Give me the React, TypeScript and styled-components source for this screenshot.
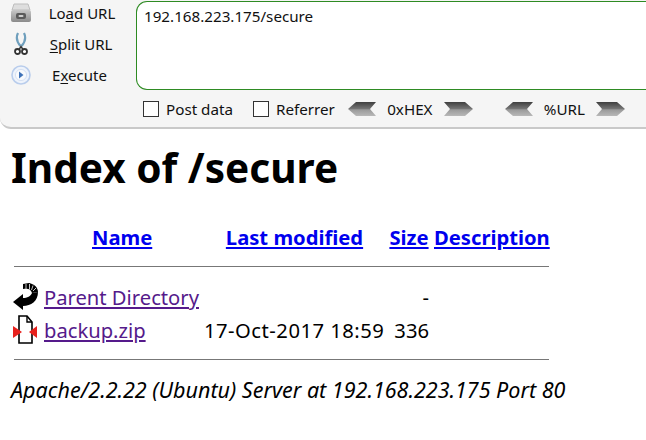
import React from "react";
import styled, { createGlobalStyle } from "styled-components";

const GlobalStyle = createGlobalStyle`
  html, body {
    margin: 0;
    padding: 0;
    background: #fff;
    overflow: hidden;
  }
  body {
    font-family: "Noto Sans", "Open Sans", sans-serif;
    color: #000;
  }
`;

const Page = styled.div`
  width: 646px;
  height: 440px;
  overflow: hidden;
`;

const Toolbar = styled.div`
  box-sizing: border-box;
  height: 129px;
  background: #f5f5f5;
  border-bottom: 2px solid #c9c9c9;
  border-bottom-left-radius: 11px;
  display: grid;
  grid-template-columns: 136px 1fr;
`;

const ActionList = styled.div`
  display: flex;
  flex-direction: column;
  margin-top: -3px;
`;

const Action = styled.div`
  height: 31px;
  display: grid;
  grid-template-columns: 42px 1fr;
  align-items: center;
`;

const ActionIcon = styled.div`
  display: flex;
  justify-content: center;
`;

const ActionLabel = styled.span<{ $shift: number }>`
  font-size: 15px;
  color: #111;
  text-align: center;
  white-space: nowrap;
  padding-right: ${(p) => p.$shift}px;
  u {
    text-underline-offset: 2px;
  }
`;

const Main = styled.div`
  display: flex;
  flex-direction: column;
`;

const UrlBox = styled.div`
  box-sizing: border-box;
  height: 89px;
  margin-top: 1px;
  background: #fff;
  border: 1px solid #2e8b23;
  border-right: none;
  border-radius: 11px 0 0 11px;
  padding: 4px 7px;
  font-size: 15.2px;
  color: #111;
`;

const Options = styled.div`
  display: flex;
  align-items: center;
  height: 38px;
  padding-left: 7px;
  font-size: 15.2px;
  color: #111;
`;

const Check = styled.span<{ $gap: number }>`
  display: flex;
  align-items: center;
  gap: 7px;
  margin-right: ${(p) => p.$gap}px;
  &::before {
    content: "";
    box-sizing: border-box;
    width: 16px;
    height: 16px;
    background: #fff;
    border: 1px solid #333;
  }
`;

const Codec = styled.span<{ $width: number; $gap: number }>`
  display: flex;
  align-items: center;
  justify-content: space-between;
  width: ${(p) => p.$width}px;
  margin-right: ${(p) => p.$gap}px;
`;

const Content = styled.div`
  padding-left: 11px;
`;

const Title = styled.h1`
  margin: 0;
  padding-top: 13px;
  font-size: 40.6px;
  line-height: 52px;
  font-weight: 700;
`;

const Listing = styled.div`
  margin-top: 28px;
  width: 538px;
`;

const ListRow = styled.div<{ $height: number; $top?: number }>`
  display: grid;
  grid-template-columns: 33px 162px 177px 52px 1fr;
  align-items: center;
  height: ${(p) => p.$height}px;
  margin-top: ${(p) => p.$top || 0}px;
  font-size: 20.2px;
`;

const HeadCell = styled.a<{ $indent?: number }>`
  text-align: ${(p) => (p.$indent !== undefined ? "left" : "center")};
  padding-left: ${(p) => p.$indent || 0}px;
  font-weight: 700;
  color: #0000ee;
  text-decoration: underline;
  white-space: nowrap;
`;

const DescHead = styled(HeadCell)`
  margin-left: -1px;
`;

const FileLink = styled.a`
  color: #551a8b;
  text-decoration: underline;
  white-space: nowrap;
`;

const FileIcon = styled.span`
  display: flex;
  padding-left: 2px;
`;

const Modified = styled.span`
  white-space: nowrap;
  letter-spacing: 0.5px;
  margin-left: -2px;
`;

const SizeCell = styled.span`
  text-align: right;
  white-space: nowrap;
  padding-right: 6px;
`;

const Rule = styled.hr<{ $top: number }>`
  margin: ${(p) => p.$top}px 0 0 3px;
  width: 535px;
  height: 1px;
  border: none;
  background: #777;
`;

const Signature = styled.address`
  margin-top: 16px;
  font-size: 21.5px;
  line-height: 28px;
  font-style: italic;
  white-space: nowrap;
`;

const DriveIcon = () => (
  <svg width="22" height="20" viewBox="0 0 22 20">
    <defs>
      <linearGradient id="dr" x1="0" y1="0" x2="0" y2="1">
        <stop offset="0" stopColor="#c8c8c8" />
        <stop offset="1" stopColor="#8a8a8a" />
      </linearGradient>
    </defs>
    <path d="M4 1h14l2 6H2z" fill="#dedede" stroke="#bdbdbd" />
    <rect x="1" y="7" width="20" height="12" rx="2" fill="url(#dr)" />
    <rect x="6" y="10" width="10" height="6" rx="2" fill="#5a5a5a" />
    <rect x="8.5" y="12" width="5" height="2" rx="1" fill="#cfcfcf" />
  </svg>
);

const ScissorsIcon = () => (
  <svg width="14" height="24" viewBox="0 0 14 24">
    <path d="M4 1c-2 4-1 9 2.500 13" fill="none" stroke="#6f9fbd" strokeWidth="2.2" />
    <path d="M10 1c2 4 1 9-2.500 13" fill="none" stroke="#6f9fbd" strokeWidth="2.2" />
    <circle cx="3.500" cy="19.500" r="2.500" fill="#fff" stroke="#333" strokeWidth="1.8" />
    <circle cx="10.500" cy="19.500" r="2.500" fill="#fff" stroke="#333" strokeWidth="1.8" />
    <path d="M5 17.500l2-3 2 3" fill="none" stroke="#333" strokeWidth="1.4" />
  </svg>
);

const PlayIcon = () => (
  <svg width="20" height="20" viewBox="0 0 20 20">
    <circle cx="10" cy="10" r="9" fill="#eef3fb" stroke="#b9cdec" strokeWidth="1.6" />
    <circle cx="10" cy="10" r="5.600" fill="#f8fafd" stroke="#d6e1f3" />
    <path d="M8 6.500l4.500 3.500L8 13.500z" fill="#3f72b8" />
  </svg>
);

const Chevron = ({ flip }: { flip?: boolean }) => (
  <svg width="29" height="16" viewBox="0 0 29 16">
    <defs>
      <linearGradient id="chev" x1="0" y1="0" x2="0" y2="1">
        <stop offset="0" stopColor="#3f3f3f" />
        <stop offset="0.5" stopColor="#777" />
        <stop offset="0.55" stopColor="#9a9a9a" />
        <stop offset="1" stopColor="#b8b8b8" />
      </linearGradient>
    </defs>
    <path
      d={flip ? "M0 1h21l8 7-8 7H0l6-7z" : "M29 1H9L1 8l8 7h20l-6-7z"}
      fill="url(#chev)"
    />
  </svg>
);

const BackIcon = () => (
  <svg width="25" height="27" viewBox="0 0 25 27">
    <path d="M0 19l10-8v4c4 0 8-2 9-5l6-1c0 9-7 14-15 14v4z" fill="#000" />
    <path d="M10 1l6-1c5 1 9 4 9 9l-6 1c-1-4-4-5-9-4z" fill="#000" />
    <path d="M13 1v5M16.500 1v5.500M20 2.500l-1.500 4.500M23 5l-3 3" stroke="#ddd" strokeWidth="0.9" fill="none" />
  </svg>
);

const ZipIcon = () => (
  <svg width="24" height="29" viewBox="0 0 24 29">
    <path d="M6 1h8l5 6v21H6z" fill="#fff" stroke="#000" strokeWidth="1.6" />
    <path d="M14 1v6h5" fill="none" stroke="#000" strokeWidth="1.4" />
    <path d="M0 11l9 6-9 6z" fill="#e8211d" />
    <path d="M24 11l-8 6 8 6z" fill="#e8211d" />
  </svg>
);

const App = () => (
  <Page>
    <GlobalStyle />
    <Toolbar>
      <ActionList>
        <Action>
          <ActionIcon><DriveIcon /></ActionIcon>
          <ActionLabel $shift={14}>Lo<u>a</u>d URL</ActionLabel>
        </Action>
        <Action>
          <ActionIcon><ScissorsIcon /></ActionIcon>
          <ActionLabel $shift={16}><u>S</u>plit URL</ActionLabel>
        </Action>
        <Action>
          <ActionIcon><PlayIcon /></ActionIcon>
          <ActionLabel $shift={19}>E<u>x</u>ecute</ActionLabel>
        </Action>
      </ActionList>
      <Main>
        <UrlBox>192.168.223.175/secure</UrlBox>
        <Options>
          <Check $gap={20}>Post data</Check>
          <Check $gap={12}>Referrer</Check>
          <Codec $width={126} $gap={31}>
            <Chevron />
            0xHEX
            <Chevron flip />
          </Codec>
          <Codec $width={121} $gap={0}>
            <Chevron />
            %URL
            <Chevron flip />
          </Codec>
        </Options>
      </Main>
    </Toolbar>
    <Content>
      <Title>Index of /secure</Title>
      <Listing>
        <ListRow $height={30}>
          <span />
          <HeadCell $indent={48}>Name</HeadCell>
          <HeadCell>Last modified</HeadCell>
          <HeadCell>Size</HeadCell>
          <DescHead $indent={0}>Description</DescHead>
        </ListRow>
        <Rule $top={14} />
        <ListRow $height={33} $top={13}>
          <FileIcon><BackIcon /></FileIcon>
          <FileLink>Parent Directory</FileLink>
          <Modified />
          <SizeCell>-</SizeCell>
        </ListRow>
        <ListRow $height={33}>
          <FileIcon><ZipIcon /></FileIcon>
          <FileLink>backup.zip</FileLink>
          <Modified>17-Oct-2017 18:59</Modified>
          <SizeCell>336</SizeCell>
        </ListRow>
        <Rule $top={13} />
      </Listing>
      <Signature>Apache/2.2.22 (Ubuntu) Server at 192.168.223.175 Port 80</Signature>
    </Content>
  </Page>
);

export default App;
